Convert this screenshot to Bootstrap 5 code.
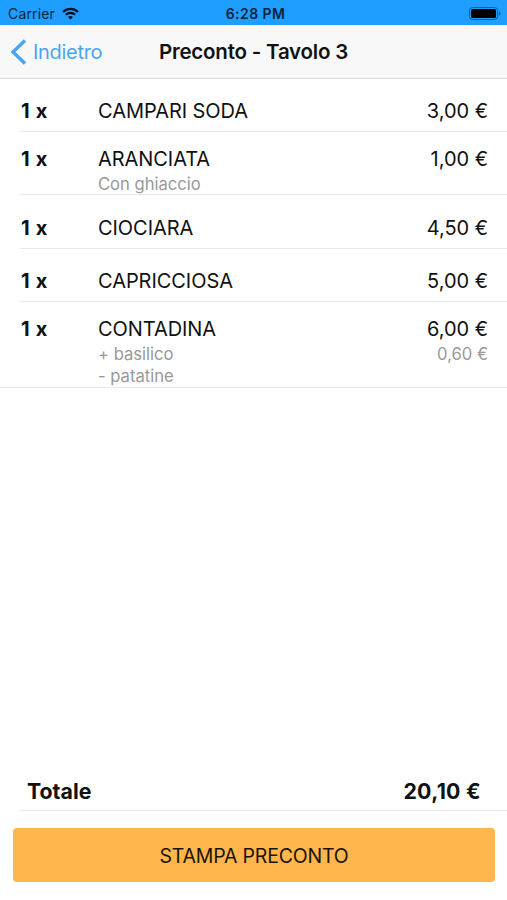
<!DOCTYPE html>
<html lang="it">
<head>
<meta charset="utf-8">
<meta name="viewport" content="width=device-width, initial-scale=1">
<title>Preconto - Tavolo 3</title>
<link rel="stylesheet" href="https://cdn.jsdelivr.net/npm/bootstrap@5.3.0/dist/css/bootstrap.min.css">
<style>
  body { font-family: Inter, "Liberation Sans", sans-serif; font-size: 20px; color: #111; background: #fff; }
  .status-bar { height: 25px; background: #1e9fff; color: #0b2239; font-size: 14px; line-height: 27px; }
  .carrier { letter-spacing: .15px; }
  .status-clock { font-size: 14px; font-weight: 600; letter-spacing: .45px; }
  .title-bar { height: 54px; background: #f8f8f8; border-bottom: 1px solid #d9d9d9; line-height: 54px; }
  .back-link { color: #4aa5ee; gap: 6px; letter-spacing: -.3px; }
  .back-link svg { margin: 0 0 2px 10px; }
  .back-link span { padding-bottom: 1px; }
  .screen-title { font-size: 20.5px; font-weight: 600; letter-spacing: -.2px; line-height: inherit; }
  .order-row { margin-left: 20px; padding: 19px 19px 0 1px; height: 53px; border-bottom: 1px solid #e9e9e9; line-height: 26px; }
  .row-detail { height: 63px; padding-top: 14px; }
  .row-tall { height: 53.5px; padding-top: 19.5px; }
  .row-last { height: 86px; padding: 14px 19px 0 21px; margin-left: 0; }
  .qty { width: 77px; font-weight: 700; word-spacing: 1.5px; }
  .dish { letter-spacing: -.06px; }
  .price { letter-spacing: -.03px; }
  .extra { font-size: 16.6px; line-height: 22px; color: #999; letter-spacing: 0; padding-top: .5px; margin-bottom: -.5px; }
  .total-row { margin-left: 20px; height: 41px; padding: 0 26px 0 7px; line-height: 42px; font-size: 21.3px; border-bottom: 1px solid #e9e9e9; }
  .total-sum { letter-spacing: .3px; }
  .print-btn, .print-btn:hover { height: 54px; margin: 17px 12px 18px 13px; padding-top: 10px; background: #ffb74d; color: #1c1204; border: 0; border-radius: 4px; font-size: 19.5px; letter-spacing: -.2px; }
</style>
<script src="https://cdn.jsdelivr.net/npm/bootstrap@5.3.0/dist/js/bootstrap.bundle.min.js"></script>
</head>
<body class="d-flex flex-column vh-100 overflow-hidden">
  <header>
    <div class="status-bar row g-0">
      <div class="col d-flex align-items-center"><span class="carrier ms-2">Carrier</span>
        <svg width="17" height="13" viewBox="0 0 17 13" fill="none" stroke="#041120" stroke-width="2.2" style="margin-left:7px"><path d="M1 5C5.200.8 11.800.8 16 5M3.800 7.800c2.600-2.600 6.800-2.600 9.400 0"/><path d="M8.500 12.500 6 10c1.400-1.300 3.600-1.300 5 0z" fill="#041120" stroke="none"/></svg>
      </div>
      <div class="col-auto status-clock ps-1">6:28 PM</div>
      <div class="col d-flex align-items-center justify-content-end">
        <svg class="me-1" width="35" height="15" viewBox="0 0 35 15"><rect x="1.500" y="1.500" width="28" height="12" rx="3" fill="none" stroke="#0f5b96"/><rect x="3" y="3" width="25" height="9" rx="1.500"/><path d="M31 5.500c2 .5 2 3.500 0 4z" fill="#0f5b96"/></svg>
      </div>
    </div>
    <nav class="title-bar row g-0">
      <a href="#" class="col back-link d-flex align-items-center text-decoration-none">
        <svg width="17" height="26" viewBox="0 0 17 26" fill="none" stroke="#4aa5ee" stroke-width="3.400"><path d="M15 1.500 3 13l12 11.500"/></svg><span>Indietro</span>
      </a>
      <h1 class="col-auto screen-title m-0">Preconto - Tavolo 3</h1>
      <div class="col"></div>
    </nav>
  </header>
  <main class="flex-grow-1">
    <div class="order-row d-flex"><div class="qty">1 x</div><div class="dish flex-grow-1">CAMPARI SODA</div><div class="price">3,00 €</div></div>
    <div class="order-row row-detail d-flex"><div class="qty">1 x</div><div class="dish flex-grow-1">ARANCIATA<div class="extra">Con ghiaccio</div></div><div class="price">1,00 €</div></div>
    <div class="order-row row-tall d-flex"><div class="qty">1 x</div><div class="dish flex-grow-1">CIOCIARA</div><div class="price">4,50 €</div></div>
    <div class="order-row row-tall d-flex"><div class="qty">1 x</div><div class="dish flex-grow-1">CAPRICCIOSA</div><div class="price">5,00 €</div></div>
    <div class="order-row row-last d-flex"><div class="qty">1 x</div><div class="dish flex-grow-1">CONTADINA<div class="extra">+ basilico</div><div class="extra">- patatine</div></div><div class="price text-end">6,00 €<div class="extra">0,60 €</div></div></div>
  </main>
  <footer class="d-flex flex-column">
    <div class="total-row d-flex justify-content-between fw-bold"><span>Totale</span><span class="total-sum">20,10 €</span></div>
    <button type="button" class="btn print-btn">STAMPA PRECONTO</button>
  </footer>
</body>
</html>
